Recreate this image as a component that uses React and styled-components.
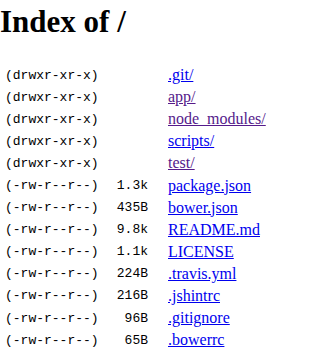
import styled, { createGlobalStyle } from "styled-components";

const GlobalStyle = createGlobalStyle`
  body {
    margin: 0;
    background: #fff;
    color: #000;
    font-family: "Liberation Serif", "Times New Roman", serif;
  }
`;

const Page = styled.div`
  width: 310px;
  height: 351px;
  overflow: hidden;
`;

const Title = styled.h1`
  margin: 3px 0 0;
  font-size: 31px;
  font-weight: bold;
  line-height: 37px;
`;

const Listing = styled.div`
  display: grid;
  grid-template-columns: 100px 48px 1fr;
  grid-auto-rows: 22.1px;
  margin-top: 24px;
`;

const Mono = styled.span`
  display: flex;
  align-items: center;
  font-family: "Liberation Mono", "Courier New", monospace;
  font-size: 13px;
  justify-content: ${(p) => (p.$right ? "flex-end" : "flex-start")};
  padding-left: ${(p) => (p.$right ? "0" : "5px")};
`;

const NameCell = styled.span`
  display: flex;
  align-items: center;
  padding-left: 20px;
  font-size: 16px;
`;

const FileLink = styled.a`
  color: ${(p) => (p.$visited ? "#551a8b" : "#0000ee")};
  text-decoration: underline;
`;

const entries = [
  { mode: "(drwxr-xr-x)", size: "", name: ".git/" },
  { mode: "(drwxr-xr-x)", size: "", name: "app/", visited: true },
  { mode: "(drwxr-xr-x)", size: "", name: "node_modules/", visited: true },
  { mode: "(drwxr-xr-x)", size: "", name: "scripts/" },
  { mode: "(drwxr-xr-x)", size: "", name: "test/", visited: true },
  { mode: "(-rw-r--r--)", size: "1.3k", name: "package.json" },
  { mode: "(-rw-r--r--)", size: "435B", name: "bower.json" },
  { mode: "(-rw-r--r--)", size: "9.8k", name: "README.md" },
  { mode: "(-rw-r--r--)", size: "1.1k", name: "LICENSE" },
  { mode: "(-rw-r--r--)", size: "224B", name: ".travis.yml" },
  { mode: "(-rw-r--r--)", size: "216B", name: ".jshintrc" },
  { mode: "(-rw-r--r--)", size: "96B", name: ".gitignore" },
  { mode: "(-rw-r--r--)", size: "65B", name: ".bowerrc" },
];

export default function App() {
  return (
    <>
      <GlobalStyle />
      <Page>
        <Title>Index of /</Title>
        <Listing>
          {entries.map((e) => [
            <Mono key={e.name + "-mode"}>{e.mode}</Mono>,
            <Mono key={e.name + "-size"} $right>{e.size}</Mono>,
            <NameCell key={e.name}>
              <FileLink href={"/" + e.name} $visited={e.visited}>{e.name}</FileLink>
            </NameCell>,
          ])}
        </Listing>
      </Page>
    </>
  );
}
